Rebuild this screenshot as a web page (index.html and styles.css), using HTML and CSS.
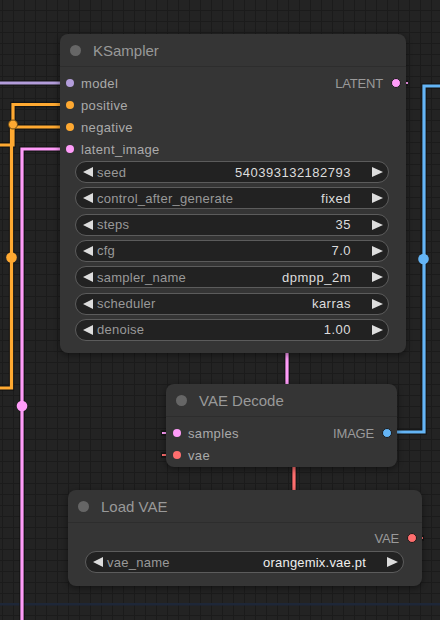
FILE: index.html
```html
<!DOCTYPE html>
<html>
<head>
<meta charset="utf-8">
<link rel="stylesheet" href="styles.css">
</head>
<body>
<div class="canvas">
  <svg class="links" width="440" height="620" viewBox="0 0 440 620">
    <rect x="0" y="603" width="440" height="2.5" fill="#1e2738"/>
    <g fill="none" stroke="#111" stroke-opacity="0.75" stroke-width="5.5">
      <path d="M0 83 H62"/>
      <path d="M0 145 H13 V104.5 H62"/>
      <path d="M0 388 H11.5 V127 H62"/>
      <path d="M22 622 V149 H62"/>
      <path d="M287 350 V386"/>
      <path d="M294 465 V492"/>
      <path d="M384 432 H424 V86 H442"/>
      <path d="M161 433 H168"/>
      <path d="M161 455 H168"/>
      <path d="M404 83 H408"/>
      <path d="M419 538 H424"/>
    </g>
    <g fill="none" stroke-width="3.2">
      <path d="M0 83 H62" stroke="#b39ddb"/>
      <path d="M0 145 H13 V104.5 H62" stroke="#ffa931"/>
      <path d="M0 388 H11.5 V127 H62" stroke="#ffa931"/>
      <path d="M22 622 V149 H62" stroke="#ff9cf9"/>
      <path d="M287 350 V386" stroke="#ff9cf9"/>
      <path d="M294 465 V492" stroke="#ff6e6e"/>
      <path d="M384 432 H424 V86 H442" stroke="#64b5f6"/>
      <path d="M162 433 H168" stroke="#ff9cf9" stroke-width="2"/>
      <path d="M162 455 H168" stroke="#ff6e6e" stroke-width="2"/>
      <path d="M405 83 H408" stroke="#ff9cf9" stroke-width="2"/>
      <path d="M420 538 H423" stroke="#ff6e6e" stroke-width="2"/>
    </g>
    <circle cx="13" cy="124.5" r="4.5" fill="#ffa931" stroke="#6a4a15" stroke-width="1"/>
    <circle cx="11.5" cy="257.5" r="5.3" fill="#ffa931"/>
    <circle cx="22" cy="406" r="5.3" fill="#ff9cf9"/>
    <circle cx="423.5" cy="259" r="5.3" fill="#64b5f6"/>
  </svg>

  <div class="node ksampler">
    <div class="title"><span class="tdot"></span><span class="tname">KSampler</span></div>
    <div class="body">
      <div class="slots">
        <div class="col inputs">
          <div class="slot in"><span class="dot c-model"></span><span class="lbl">model</span></div>
          <div class="slot in"><span class="dot c-cond"></span><span class="lbl">positive</span></div>
          <div class="slot in"><span class="dot c-cond"></span><span class="lbl">negative</span></div>
          <div class="slot in"><span class="dot c-latent"></span><span class="lbl">latent_image</span></div>
        </div>
        <div class="col outputs">
          <div class="slot out"><span class="olbl">LATENT</span><span class="dot ring c-latent"></span></div>
        </div>
      </div>
      <div class="widgets">
        <div class="widget"><span class="arr l"></span><span class="wlabel">seed</span><span class="wval">540393132182793</span><span class="arr r"></span></div>
        <div class="widget"><span class="arr l"></span><span class="wlabel">control_after_generate</span><span class="wval">fixed</span><span class="arr r"></span></div>
        <div class="widget"><span class="arr l"></span><span class="wlabel">steps</span><span class="wval">35</span><span class="arr r"></span></div>
        <div class="widget"><span class="arr l"></span><span class="wlabel">cfg</span><span class="wval">7.0</span><span class="arr r"></span></div>
        <div class="widget"><span class="arr l"></span><span class="wlabel">sampler_name</span><span class="wval">dpmpp_2m</span><span class="arr r"></span></div>
        <div class="widget"><span class="arr l"></span><span class="wlabel">scheduler</span><span class="wval">karras</span><span class="arr r"></span></div>
        <div class="widget"><span class="arr l"></span><span class="wlabel">denoise</span><span class="wval">1.00</span><span class="arr r"></span></div>
      </div>
    </div>
  </div>

  <div class="node vaedecode">
    <div class="title"><span class="tdot"></span><span class="tname">VAE Decode</span></div>
    <div class="body">
      <div class="slots">
        <div class="col inputs">
          <div class="slot in"><span class="dot c-latent"></span><span class="lbl">samples</span></div>
          <div class="slot in"><span class="dot c-vae"></span><span class="lbl">vae</span></div>
        </div>
        <div class="col outputs">
          <div class="slot out"><span class="olbl">IMAGE</span><span class="dot ring c-image"></span></div>
        </div>
      </div>
    </div>
  </div>

  <div class="node loadvae">
    <div class="title"><span class="tdot"></span><span class="tname">Load VAE</span></div>
    <div class="body">
      <div class="slots">
        <div class="col inputs"></div>
        <div class="col outputs">
          <div class="slot out"><span class="olbl">VAE</span><span class="dot ring c-vae"></span></div>
        </div>
      </div>
      <div class="widgets">
        <div class="widget"><span class="arr l"></span><span class="wlabel">vae_name</span><span class="wval strong">orangemix.vae.pt</span><span class="arr r"></span></div>
      </div>
    </div>
  </div>
</div>
</body>
</html>
```

FILE: styles.css
```css
html, body {
  margin: 0;
  padding: 0;
  background: #222;
}

.canvas {
  position: relative;
  width: 440px;
  height: 620px;
  overflow: hidden;
  background-color: #232323;
  background-image:
    linear-gradient(#1b1b1b 1px, transparent 1px),
    linear-gradient(90deg, #1b1b1b 1px, transparent 1px);
  background-size: 11px 11px;
  background-position: 2px 10px;
  font-family: "Liberation Sans", Arial, sans-serif;
}

.links {
  position: absolute;
  left: 0;
  top: 0;
}

.node {
  position: absolute;
  box-sizing: border-box;
  background: #353535;
  border-radius: 8px;
  box-shadow: 0 2px 6px rgba(0, 0, 0, 0.45);
  display: flex;
  flex-direction: column;
}

.ksampler { left: 60px; top: 34px; width: 346px; height: 319px; }
.vaedecode { left: 166px; top: 384px; width: 231px; height: 83px; }
.loadvae { left: 68px; top: 490px; width: 354px; height: 96px; }

.title {
  height: 33px;
  box-sizing: border-box;
  border-bottom: 1px solid #2d2d2d;
  display: flex;
  align-items: center;
  padding-left: 10px;
  gap: 12px;
  flex-shrink: 0;
}

.tdot {
  width: 11px;
  height: 11px;
  border-radius: 50%;
  background: #666;
}

.tname {
  color: #999;
  font-size: 15px;
  line-height: 1;
}

.body {
  padding-top: 5px;
  display: flex;
  flex-direction: column;
}

.loadvae .body { padding-top: 4px; }

.slots {
  display: flex;
  justify-content: space-between;
}

.col {
  display: flex;
  flex-direction: column;
}

.slot {
  height: 22px;
  display: flex;
  align-items: center;
}

.slot.in {
  padding-left: 6px;
  gap: 7px;
}

.vaedecode .slot.in { padding-left: 7px; }

.slot.out {
  padding-right: 6px;
  gap: 8px;
}

.dot {
  width: 8px;
  height: 8px;
  border-radius: 50%;
  box-sizing: border-box;
}

.dot.ring {
  width: 10px;
  height: 10px;
  border: 1px solid #1a1a1a;
  margin-right: -1px;
}

.c-model { background: #b39ddb; }
.c-cond { background: #ffa931; }
.c-latent { background: #ff9cf9; }
.c-vae { background: #ff6e6e; }
.c-image { background: #64b5f6; }

.lbl {
  color: #aaa;
  font-size: 13px;
  letter-spacing: 0.35px;
  line-height: 1;
}

.olbl {
  color: #9a9a9a;
  font-size: 13px;
  letter-spacing: -0.2px;
  line-height: 1;
}

.widgets {
  display: flex;
  flex-direction: column;
  gap: 4.33px;
  margin-top: 1px;
  padding-left: 15px;
  padding-right: 17px;
}

.loadvae .widgets {
  margin-top: 2px;
  padding-left: 17px;
  padding-right: 18px;
}

.widget {
  height: 22px;
  box-sizing: border-box;
  border: 1px solid #5c5c5c;
  border-radius: 11px;
  background: #222;
  display: flex;
  align-items: center;
  padding: 0 5px 0 6.5px;
  font-size: 13px;
  line-height: 1;
}

.arr {
  width: 0;
  height: 0;
  border-top: 5.5px solid transparent;
  border-bottom: 5.5px solid transparent;
  flex-shrink: 0;
}

.arr.l { border-right: 10.5px solid #ddd; }
.arr.r { border-left: 11px solid #ddd; }

.wlabel {
  color: #999;
  margin-left: 4.5px;
  letter-spacing: 0.25px;
  white-space: nowrap;
}

.wval {
  flex: 1;
  text-align: right;
  color: #ddd;
  margin-right: 21px;
  letter-spacing: 0.5px;
  white-space: nowrap;
}

.wval.strong {
  color: #eee;
  letter-spacing: 0.2px;
}
```
